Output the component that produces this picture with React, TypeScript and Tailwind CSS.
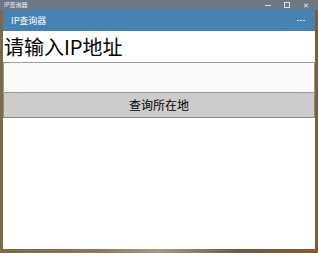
export default function App() {
  const cjk = { fontFamily: '"Noto Sans CJK SC", "Noto Sans", sans-serif' };
  return (
    <div
      className="relative flex h-[253px] w-[318px] flex-col overflow-hidden bg-[linear-gradient(90deg,#7a6a4a_0%,#8d7756_30%,#a59a86_50%,#6d5a40_75%,#8a5a30_100%)]"
      style={cjk}
    >
      {/* window title bar */}
      <div className="flex h-[10px] w-full shrink-0 items-center bg-[#6c7886] pl-[4px] pr-[9px] text-[#e8ecf0]">
        <span className="text-[6px] leading-none">IP查询器</span>
        <div className="ml-auto flex items-center gap-[13px]">
          <span className="block h-px w-[6px] bg-[#dde2e8]" />
          <span className="block h-[6px] w-[6px] border border-[#dde2e8]" />
          <span className="text-[7px] leading-none">✕</span>
        </div>
      </div>

      {/* client area */}
      <div className="mx-[3px] flex h-[239px] shrink-0 flex-col bg-white">
        <div className="flex h-[21px] shrink-0 items-center bg-[#4682b4] pl-[8px] pr-[10px] text-white">
          <span className="text-[9px] leading-none">IP查询器</span>
          <div className="ml-auto flex items-center gap-[1px]">
            <span className="block h-[1px] w-[2px] bg-[#d6e4f0]" />
            <span className="block h-[1px] w-[2px] bg-[#d6e4f0]" />
            <span className="block h-[1px] w-[2px] bg-[#d6e4f0]" />
          </div>
        </div>

        <div className="flex h-[31px] items-center pl-[1px] text-[20px] leading-none text-black">
          请输入IP地址
        </div>

        <div className="h-[31px] border border-[#9a9a9a] bg-[#fafafa]" />

        <div className="flex h-[25px] items-center justify-center border border-t-0 border-[#8a8a8a] bg-[#cccccc] text-[12px] leading-none text-black">
          查询所在地
        </div>

        <div className="flex-1 bg-white" />
      </div>
    </div>
  );
}
